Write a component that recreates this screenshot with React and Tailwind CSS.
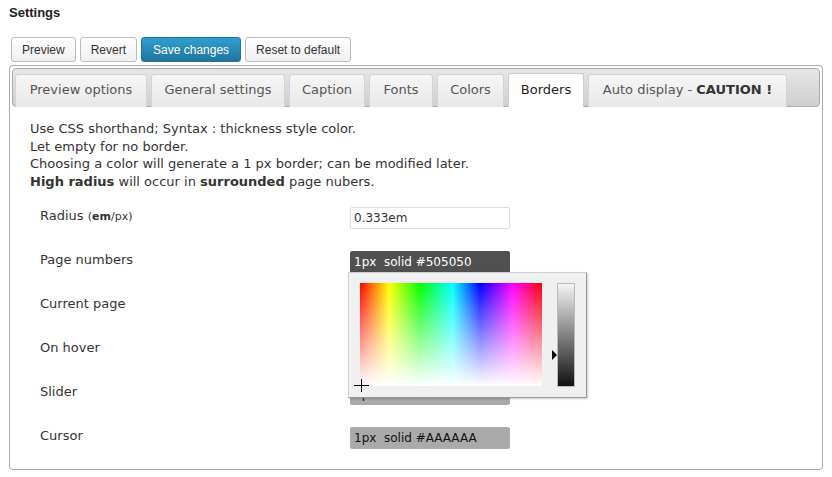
import React from 'react';

const tabs = [
  { label: 'Preview options', w: 'w-[132px]' },
  { label: 'General settings', w: 'w-[134px]' },
  { label: 'Caption', w: 'w-[76px]' },
  { label: 'Fonts', w: 'w-[64px]' },
  { label: 'Colors', w: 'w-[67px]' },
  { label: 'Borders', w: 'w-[76px]', active: true },
  { label: 'Auto display - ', bold: 'CAUTION !', w: 'w-[199px]' },
];

const rows = [
  { label: 'Page numbers', value: '1px  solid #505050', cls: 'bg-[#505050] text-white border-[#505050]' },
  { label: 'Current page', value: '1px  solid #000000', cls: 'bg-white text-[#333] border-[#ddd]' },
  { label: 'On hover', value: '1px  solid #000000', cls: 'bg-white text-[#333] border-[#ddd]' },
  { label: 'Slider', value: '1px  solid #000000', cls: 'bg-[#a9a9a9] text-[#111] border-[#a9a9a9]' },
  { label: 'Cursor', value: '1px  solid #AAAAAA', cls: 'bg-[#aaaaaa] text-[#111] border-[#aaaaaa]' },
];

const Btn = ({ children, primary }) => (
  <button
    className={
      primary
        ? 'h-[25px] px-[11px] rounded-[3px] border border-[#21759b] bg-[linear-gradient(to_bottom,#2e9fd2,#21759b)] text-white text-[12px]'
        : 'h-[25px] px-[10px] rounded-[3px] border border-[#bbb] bg-[linear-gradient(to_bottom,#fefefe,#f0f0f0)] text-[#333] text-[12px]'
    }
  >
    {children}
  </button>
);

const ColorPicker = () => (
  <div className="absolute left-[-2px] top-[21px] z-10 w-[239px] h-[126px] bg-[#f0f0f0] border border-[#cfcfcf] border-r-[#999] border-b-[#999] shadow-[1px_1px_2px_rgba(0,0,0,0.2)]">
    <div className="absolute left-[11px] top-[10px] w-[182px] h-[103px] bg-[linear-gradient(to_right,#f00,#ff0_16%,#0f0_33%,#0ff_51%,#00f_66%,#f0f_84%,#f00)]">
      <div className="w-full h-full bg-[linear-gradient(to_bottom,rgba(255,255,255,0),#fff)]" />
    </div>
    {/* crosshair */}
    <div className="absolute left-[12px] top-[106px] w-px h-[13px] bg-black" />
    <div className="absolute left-[5px] top-[112px] w-[15px] h-px bg-black" />
    {/* arrow */}
    <div className="absolute left-[203px] top-[77px] w-0 h-0 border-y-[5px] border-y-transparent border-l-[5px] border-l-black" />
    <div className="absolute left-[208px] top-[10px] w-[18px] h-[104px] border border-[#bbb] bg-[linear-gradient(to_bottom,#f4f4f4,#111)]" />
  </div>
);

export default function App() {
  return (
    <div className="w-[832px] h-[477px] bg-white px-[9px] pt-[5px] font-['DejaVu_Sans',sans-serif] text-[#333] overflow-hidden">
      <h2 className="font-['Liberation_Sans',Arial,sans-serif] font-bold text-[13px] leading-[16px] text-[#222]">Settings</h2>

      <div className="flex gap-[4px] pl-[2px] mt-[16px] font-['Liberation_Sans',Arial,sans-serif]">
        <Btn>Preview</Btn>
        <Btn>Revert</Btn>
        <Btn primary>Save changes</Btn>
        <Btn>Reset to default</Btn>
      </div>

      <div className="mt-[3px] h-[405px] border border-[#aaa] rounded-[4px] p-[2px]">
        <div className="h-[39px] rounded-[4px] border border-[#aaa] bg-[linear-gradient(to_bottom,#e6e6e6,#cfcfcf)] flex items-end gap-[4px] pl-[2px]">
          {tabs.map(t => (
            <div
              key={t.label}
              className={
                'h-[33px] mb-[-1px] pb-[2px] flex items-center justify-center rounded-t-[3px] border border-b-0 text-[13px] whitespace-pre ' +
                t.w +
                (t.active
                  ? ' bg-white border-[#ccc] text-[#222] h-[34px]'
                  : ' bg-[linear-gradient(to_bottom,#f6f6f6,#e8e8e8)] border-[#d3d3d3] text-[#555]')
              }
            >
              {t.label}
              {t.bold && <b className="text-[#333]">{t.bold}</b>}
            </div>
          ))}
        </div>

        <div className="pl-[18px] pt-[13px] text-[13px] leading-[17.6px]">
          <p>Use CSS shorthand; Syntax : thickness style color.</p>
          <p>Let empty for no border.</p>
          <p>Choosing a color will generate a 1 px border; can be modified later.</p>
          <p><b>High radius</b> will occur in <b>surrounded</b> page nubers.</p>
        </div>

        <div className="mt-[6px] pl-[28px]">
          <div className="h-[44px] flex items-center">
            <div className="w-[310px] text-[13px] mt-[-5px]">
              Radius <span className="text-[11px]">(<b>em</b>/px)</span>
            </div>
            <div className="w-[160px] h-[22px] border border-[#ddd] rounded-[2px] px-[3px] text-[12px] leading-[20px] bg-white">0.333em</div>
          </div>
          {rows.map((r, i) => (
            <div key={r.label} className="h-[44px] flex items-center">
              <div className="w-[310px] text-[13px] mt-[-5px]">{r.label}</div>
              <div className="relative">
                <div className={'w-[160px] h-[22px] border rounded-[2px] px-[3px] text-[12px] leading-[20px] whitespace-pre ' + r.cls}>
                  {r.value}
                </div>
                {i === 0 && <ColorPicker />}
              </div>
            </div>
          ))}
        </div>
      </div>
    </div>
  );
}
